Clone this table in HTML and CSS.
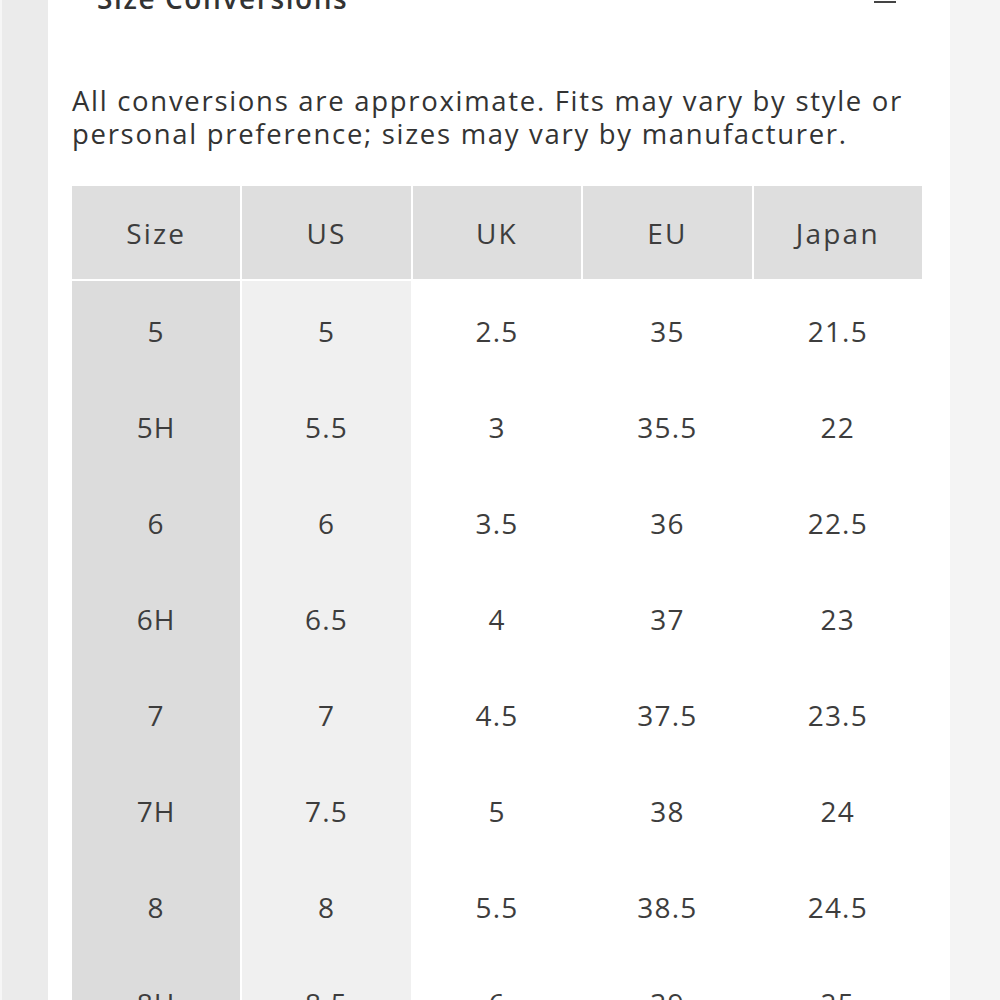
FILE: index.html
```html
<!DOCTYPE html>
<html>
<head>
<meta charset="utf-8">
<link rel="stylesheet" href="styles.css">
</head>
<body>
<div class="page">
  <div class="strip strip-left"></div>
  <main class="panel">
    <div class="panel-head">
      <h2 class="title">Size Conversions</h2>
      <span class="collapse" aria-label="collapse"></span>
    </div>
    <p class="note">All conversions are approximate. Fits may vary by style or personal preference; sizes may vary by manufacturer.</p>
    <div class="table">
      <div class="thead">
        <div class="th">Size</div>
        <div class="th">US</div>
        <div class="th">UK</div>
        <div class="th">EU</div>
        <div class="th">Japan</div>
      </div>
      <div class="tbody">
        <div class="td c1">5</div><div class="td c2">5</div><div class="td">2.5</div><div class="td">35</div><div class="td">21.5</div>
        <div class="td c1">5H</div><div class="td c2">5.5</div><div class="td">3</div><div class="td">35.5</div><div class="td">22</div>
        <div class="td c1">6</div><div class="td c2">6</div><div class="td">3.5</div><div class="td">36</div><div class="td">22.5</div>
        <div class="td c1">6H</div><div class="td c2">6.5</div><div class="td">4</div><div class="td">37</div><div class="td">23</div>
        <div class="td c1">7</div><div class="td c2">7</div><div class="td">4.5</div><div class="td">37.5</div><div class="td">23.5</div>
        <div class="td c1">7H</div><div class="td c2">7.5</div><div class="td">5</div><div class="td">38</div><div class="td">24</div>
        <div class="td c1">8</div><div class="td c2">8</div><div class="td">5.5</div><div class="td">38.5</div><div class="td">24.5</div>
        <div class="td c1">8H</div><div class="td c2">8.5</div><div class="td">6</div><div class="td">39</div><div class="td">25</div>
        <div class="td c1">9</div><div class="td c2">9</div><div class="td">6.5</div><div class="td">39.5</div><div class="td">25.5</div>
      </div>
    </div>
  </main>
  <div class="strip strip-right"></div>
</div>
</body>
</html>
```

FILE: styles.css
```css
html, body {
  margin: 0;
  padding: 0;
  background: #ffffff;
  overflow: hidden;
}

.page {
  display: flex;
  width: 1000px;
  height: 1000px;
  overflow: hidden;
  font-family: "Open Sans", "Noto Sans", sans-serif;
  color: #333;
}

.strip {
  flex: none;
  height: 100%;
}

.strip-left {
  width: 46px;
  background: #ebebeb;
  border-left: 2px solid #f6f6f6;
}

.strip-right {
  width: 50px;
  background: #f4f4f4;
}

.panel {
  flex: 1;
  background: #ffffff;
  padding: 0 28px 0 24px;
  overflow: hidden;
}

.panel-head {
  display: flex;
  align-items: flex-start;
  justify-content: space-between;
  margin-top: -19px;
  padding-left: 25px;
}

.title {
  margin: 0;
  font-size: 28px;
  line-height: 34px;
  font-weight: 600;
  letter-spacing: 1.6px;
  color: #333;
}

.collapse {
  width: 22px;
  height: 2px;
  background: #444;
  margin-top: 20px;
  margin-right: 26px;
}

.note {
  margin: 69px 0 0 0;
  font-size: 27.5px;
  line-height: 33px;
  letter-spacing: 1.7px;
  color: #333;
}

.table {
  margin-top: 36px;
  width: 850px;
}

.thead,
.tbody {
  display: grid;
  grid-template-columns: repeat(5, 1fr);
  column-gap: 2px;
}

.th {
  height: 93px;
  background: #dedede;
  display: flex;
  align-items: center;
  justify-content: center;
  padding-top: 1px;
  box-sizing: border-box;
  font-size: 28px;
  letter-spacing: 2.2px;
  color: #3d3d3d;
}

.tbody {
  margin-top: 2px;
}

.td {
  height: 96px;
  display: flex;
  align-items: center;
  justify-content: center;
  padding-top: 3px;
  box-sizing: border-box;
  font-size: 28px;
  letter-spacing: 1.2px;
  color: #3d3d3d;
  background: #ffffff;
}

.td.c1 {
  background: #dcdcdc;
}

.td.c2 {
  background: #f0f0f0;
}
```
